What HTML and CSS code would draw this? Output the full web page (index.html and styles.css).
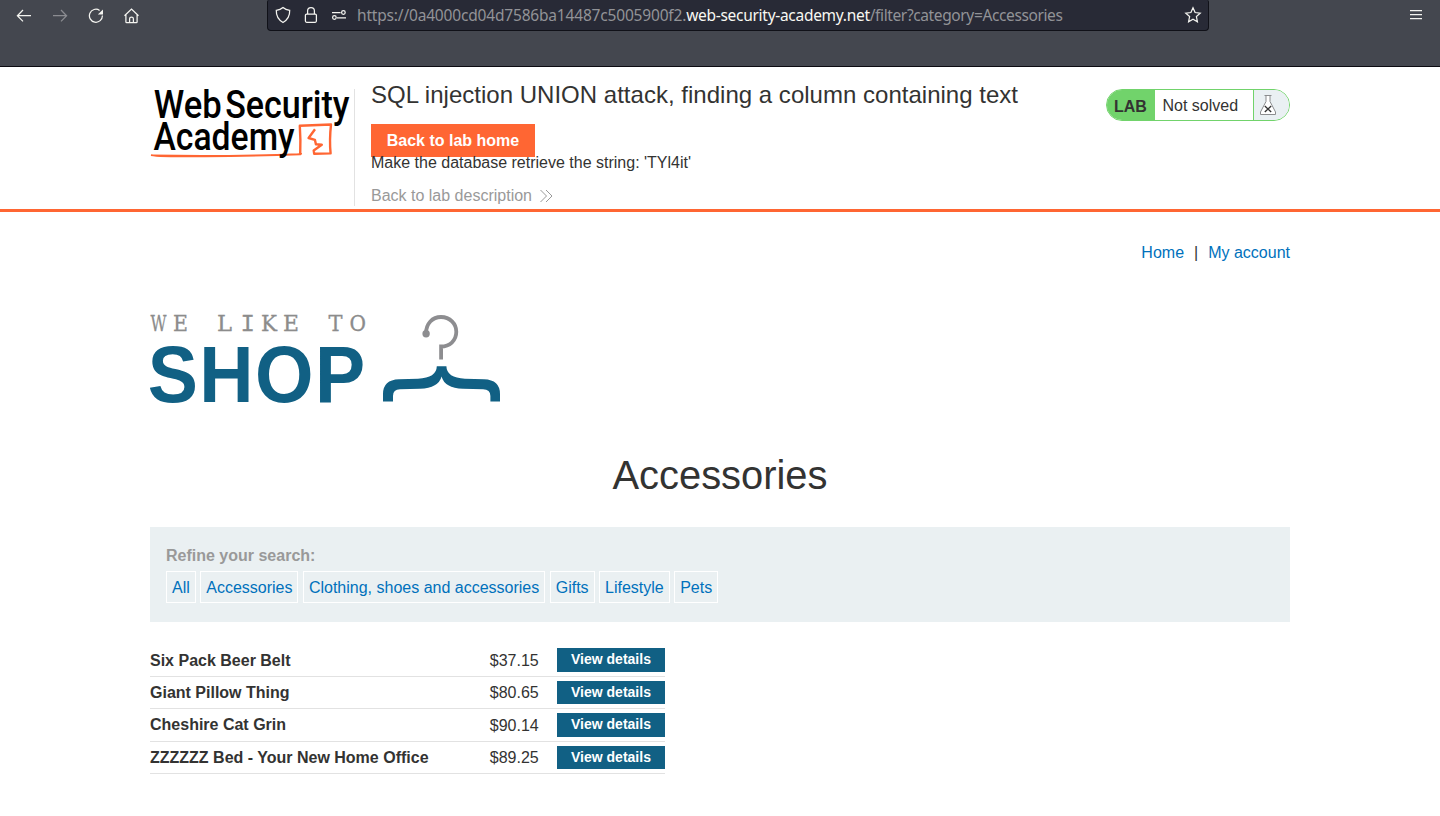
FILE: index.html
```html
<!DOCTYPE html>
<html lang="en">
<head>
<meta charset="utf-8">
<title>SQL injection UNION attack, finding a column containing text</title>
<link rel="stylesheet" href="styles.css">
</head>
<body>
<div class="browser">
  <nav class="nav-icons">
    <svg width="16" height="16" viewBox="0 0 16 16"><path d="M15 7.7H1.7M7 2 1.4 7.7 7 13.4"/></svg>
    <svg class="dim" width="16" height="16" viewBox="0 0 16 16"><path d="M1 7.7h13.3M9 2 14.6 7.7 9 13.4"/></svg>
    <svg width="16" height="16" viewBox="0 0 16 16"><path d="M14.4 7.5A6.5 6.5 0 1 1 11.6 2.4"/><path class="solid" d="M15 1.6v4.9H9.8z"/></svg>
    <svg width="16" height="16" viewBox="0 0 16 16"><path d="M.5 7.7 7.5 1 14.5 7.7M1.9 6.5v7.4q0 .8.8.8h9.6q.8 0 .8-.8V6.5M5.6 14.7v-4q0-1.5 1.9-1.5t1.9 1.5v4"/></svg>
  </nav>
  <div class="address">
    <div class="address-icons">
      <svg width="16" height="18" viewBox="0 0 16 18"><path d="M8 1.5Q5.4 3.7 1.3 4.3 1 12.5 8 16.5 15 12.5 14.7 4.3 10.6 3.7 8 1.5z"/></svg>
      <svg width="16" height="18" viewBox="0 0 16 18"><rect x="2.4" y="8" width="11" height="8.3" rx="1.2"/><path d="M4.6 8V4.8Q4.6 1.5 8 1.5t3.4 3.3V8"/></svg>
      <svg width="16" height="18" viewBox="0 0 16 18"><path d="M1 6.5h8.6M6 11.8h9"/><circle cx="12.4" cy="6.5" r="1.8"/><circle cx="3.4" cy="11.5" r="1.8"/></svg>
    </div>
    <div class="url">https://0a4000cd04d7586ba14487c5005900f2.<span class="domain">web-security-academy.net</span><span class="path">/filter?category=Accessories</span></div>
    <svg class="star" width="18" height="18" viewBox="0 0 18 18"><path d="M9 1.8l2.1 4.7 5.1.6-3.8 3.4 1 5.2L9 13.2l-4.4 2.5 1-5.2L1.8 7.1l5.1-.6z"/></svg>
  </div>
  <svg class="menu" width="14" height="14" viewBox="0 0 14 14"><path d="M1 2.5h12M1 6.5h12M1 10.5h12"/></svg>
</div>

<header class="lab-header">
  <div class="container header-row">
    <svg class="academy-logo" width="204" height="80" viewBox="150 85 204 80">
      <text x="153.7" y="117.7" textLength="68" lengthAdjust="spacingAndGlyphs">Web</text>
      <text x="225.2" y="117.7" textLength="124.3" lengthAdjust="spacingAndGlyphs">Security</text>
      <path class="scribble-line" d="M151 155.2Q205 156.2 255 155.1T301 153.6L300.4 154.6Q250 156.3 205 156.6T151 155.2z"/>
      <path class="scribble" d="M300.2 154.6Q300.8 140 299.8 125.8L331 124.5Q329.3 140 330.6 153.4L314.2 153.8 313.7 150.4 321.8 144.7 315.9 144.3 314.9 139.8 308.6 138 315 129.2"/>
      <text x="153.5" y="150" textLength="141" lengthAdjust="spacingAndGlyphs">Academy</text>
    </svg>
    <div class="title-block">
      <h2>SQL injection UNION attack, finding a column containing text</h2>
      <a class="lab-home">Back to lab home</a>
      <p class="hint">Make the database retrieve the string: 'TYl4it'</p>
      <a class="description">Back to lab description
        <svg width="14" height="14" viewBox="0 0 14 14"><path d="M.5 1l6 6-6 6M6 1l6 6-6 6"/></svg>
      </a>
    </div>
    <div class="status">
      <span class="status-lab">LAB</span>
      <span class="status-text">Not solved</span>
      <span class="status-icon"><svg width="18" height="22" viewBox="0 0 18 22"><path class="flask" d="M5.5 1.5h7M7 1.5V7.5L1.5 18V20.5h15V18L11 7.5V1.5"/><path class="cross" d="M5.8 12l6.4 6M12.2 12l-6.4 6"/></svg></span>
    </div>
  </div>
</header>

<main class="container">
  <nav class="top-links"><a>Home</a><span>|</span><a>My account</a></nav>
  <svg class="shop-logo" width="352" height="92" viewBox="150 313 352 92">
    <g class="tagline">
      <text x="150.5" y="331" textLength="16" lengthAdjust="spacingAndGlyphs">W</text>
      <text x="173" y="331" textLength="15" lengthAdjust="spacingAndGlyphs">E</text>
      <text x="217" y="331" textLength="15" lengthAdjust="spacingAndGlyphs">L</text>
      <text class="mono" x="240.5" y="331">I</text>
      <text x="261" y="331" textLength="16" lengthAdjust="spacingAndGlyphs">K</text>
      <text x="283" y="331" textLength="16" lengthAdjust="spacingAndGlyphs">E</text>
      <text x="328.5" y="331" textLength="14" lengthAdjust="spacingAndGlyphs">T</text>
      <text x="349.5" y="331" textLength="16.5" lengthAdjust="spacingAndGlyphs">O</text>
    </g>
    <text class="shop-word" transform="translate(147.8 401.6) scale(.94 1)">SHOP</text>
    <path class="hook" d="M426 333.5C426 323.5 432.5 317 441 317 450 317 456.3 323.8 456.3 331.8 456.3 340.8 449.5 346.5 441.1 346.5V359.5"/>
    <circle class="hook-end" cx="426.1" cy="333.8" r="3.7"/>
    <path class="bar" d="M383 401.5V394Q383 379.8 399 379.2L418 378.7Q436.5 378 436.8 366.3H446.4Q446.7 378 465 378.7L484 379.2Q500 379.8 500 394V401.5H490.4V396Q490.4 389.2 483 389.2L463 388.8Q444.5 388 441.6 376.5 438.5 388 420 388.8L400 389.2Q393 389.2 393 396V401.5z"/>
  </svg>
  <h1>Accessories</h1>
  <section class="filters">
    <label>Refine your search:</label>
    <div class="filter-list"><a>All</a> <a>Accessories</a> <a>Clothing, shoes and accessories</a> <a>Gifts</a> <a>Lifestyle</a> <a>Pets</a></div>
  </section>
  <div class="products">
    <div class="product"><b>Six Pack Beer Belt</b><span>$37.15</span><a>View details</a></div>
    <div class="product"><b>Giant Pillow Thing</b><span>$80.65</span><a>View details</a></div>
    <div class="product"><b>Cheshire Cat Grin</b><span>$90.14</span><a>View details</a></div>
    <div class="product"><b>ZZZZZZ Bed - Your New Home Office</b><span>$89.25</span><a>View details</a></div>
  </div>
</main>
</body>
</html>
```

FILE: styles.css
```css
* { box-sizing: border-box; }
body {
  margin: 0;
  height: 816px;
  overflow: hidden;
  background: #fff;
  color: #333332;
  font: 16px/20px "Liberation Sans", Arial, sans-serif;
}
h1, h2, p { margin: 0; font-weight: normal; }
svg { display: block; flex: none; }
a { color: #0071bc; }

.browser {
  display: flex;
  height: 67px;
  background: #44474f;
  border-bottom: 1px solid #0c0b12;
}
.browser svg { fill: none; stroke: #f4f4f0; stroke-width: 1.25; }
.browser svg.dim { stroke: #8b8c91; }
.browser .solid { fill: #f4f4f0; stroke: none; }
.nav-icons { display: flex; gap: 20px; width: 267px; padding: 8px 0 0 16px; }
.address {
  display: flex;
  align-items: center;
  width: 942px;
  height: 31px;
  padding: 0 6px 0 7px;
  background: #282a36;
  border: 1px solid #101118;
  border-top: 0;
  border-radius: 2px 2px 4px 4px;
}
.address-icons { display: flex; gap: 12px; }
.url {
  flex: 1;
  margin-left: 10px;
  color: #929397;
  font-family: "Noto Sans", sans-serif;
  font-size: 15.5px;
  letter-spacing: -0.18px;
  white-space: nowrap;
}
.domain { color: #f8f8f2; letter-spacing: -0.29px; }
.path { letter-spacing: -0.38px; }
.menu { margin: 8px 17px 0 auto; }

.container { width: 1140px; margin: 0 auto; }
.lab-header { height: 145px; border-bottom: 3px solid #ff6633; }
.header-row { display: flex; align-items: flex-start; }
.academy-logo { margin-top: 18px; overflow: visible; }
.academy-logo text { font: 500 38.5px Roboto, sans-serif; fill: #000; }
.scribble { fill: none; stroke: #ff6633; stroke-width: 2.4; stroke-linejoin: round; }
.scribble-line { fill: #ff6633; stroke: #ff6633; stroke-width: 1.4; }
.title-block {
  flex: 1;
  height: 117px;
  margin-top: 22px;
  padding-left: 16px;
  border-left: 1px solid #e2e2e2;
}
.title-block h2 { margin-top: -8px; font-size: 24px; line-height: 28px; letter-spacing: 0.015px; }
.title-block .lab-home {
  display: block;
  width: 164px;
  height: 33px;
  margin-top: 15px;
  background: #ff6633;
  color: #fff;
  font-weight: bold;
  line-height: 33px;
  text-align: center;
}
.hint { position: relative; margin-top: -4px; }
.title-block .description { display: flex; align-items: center; gap: 8px; margin-top: 13px; color: #999; }
.description svg { fill: none; stroke: #999; stroke-width: 1; }
.status {
  display: flex;
  width: 184px;
  height: 32px;
  margin-top: 22px;
  overflow: hidden;
  border: 1px solid #71d36b;
  border-radius: 16px;
  line-height: 32px;
}
.status-lab { width: 48px; padding: 1px 0 0 7px; background: #71d36b; font-weight: bold; }
.status-text { width: 99px; padding-left: 7.5px; border-right: 1px solid #71d36b; }
.status-icon { flex: 1; padding: 4px 0 0 5px; background: #eaf0f3; }
.flask { fill: #fff; stroke: #8b8c8e; }
.cross { fill: none; stroke: #333; stroke-width: 1.3; }

.top-links { display: flex; justify-content: flex-end; gap: 10px; padding-top: 31px; }
.shop-logo { margin-top: 50px; overflow: visible; }
.tagline { font: 21.5px "DejaVu Serif", serif; fill: #8c8c8c; stroke: #8c8c8c; stroke-width: .3; }
.mono { font: 24px "Liberation Mono", monospace; }
.shop-word { font: bold 80px "Liberation Sans", Arial, sans-serif; letter-spacing: 1.5px; fill: #116084; }
.hook { fill: none; stroke: #8d8d90; stroke-width: 3.8; }
.hook-end { fill: #8d8d90; }
.bar { fill: #116084; }
h1 { margin-top: 46px; font-size: 39.9px; line-height: 48px; text-align: center; }
.filters { height: 95px; margin-top: 28px; padding: 19px 16px; background: #eaf0f2; }
.filters label { display: block; color: #999; font-weight: bold; }
.filter-list { display: flex; gap: 4.45px; margin-top: 5px; }
.filter-list a { height: 32px; padding: 0 5px; border: 1px solid #fff; line-height: 31px; }
.products { width: 515px; margin-top: 22.4px; }
.product {
  display: grid;
  grid-template-columns: 339.8px 67.2px 108px;
  align-items: center;
  height: 32.4px;
  border-bottom: 1px solid #e2e2e2;
}
.product b { padding-top: 1.2px; }
.product span { padding-top: 1.5px; }
.product a {
  height: 23.5px;
  background: #116084;
  color: #fff;
  font-size: 14px;
  font-weight: bold;
  line-height: 23.6px;
  text-align: center;
}
```
